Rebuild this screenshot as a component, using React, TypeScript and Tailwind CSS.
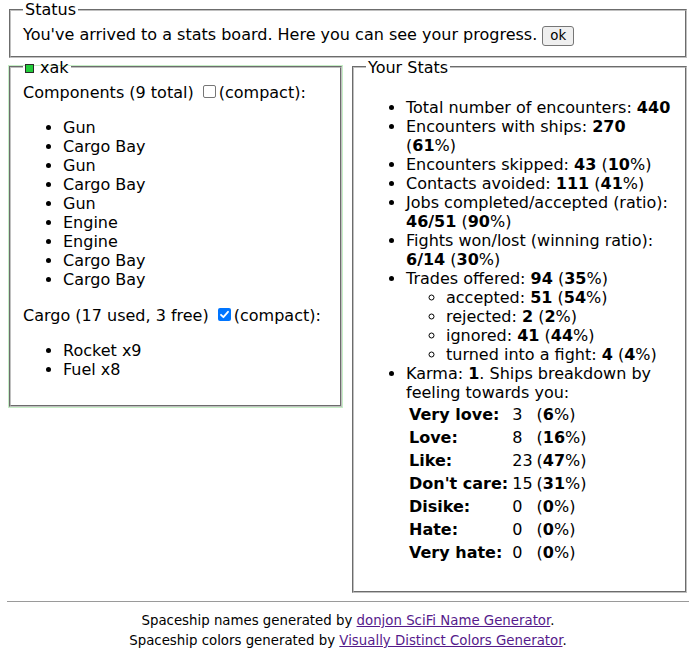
import React from "react";

const box =
  "border-2 [border-style:groove] border-[#c0c0c0] mx-[2px] px-[12px] pt-[5.6px] pb-[10px] min-w-0";

type Pct = { label: string; n: string; p: string };

const components = ["Gun", "Cargo Bay", "Gun", "Cargo Bay", "Gun", "Engine", "Engine", "Cargo Bay", "Cargo Bay"];

const feelings: Pct[] = [
  { label: "Very love:", n: "3", p: "6" },
  { label: "Love:", n: "8", p: "16" },
  { label: "Like:", n: "23", p: "47" },
  { label: "Don't care:", n: "15", p: "31" },
  { label: "Disike:", n: "0", p: "0" },
  { label: "Hate:", n: "0", p: "0" },
  { label: "Very hate:", n: "0", p: "0" },
];

function Check({ on }: { on?: boolean }) {
  if (on)
    return (
      <span className="inline-block w-[13px] h-[13px] mt-[3px] ml-[4px] mr-[3px] align-baseline rounded-[2px] bg-[#0075ff] relative">
        <svg viewBox="0 0 13 13" className="absolute inset-0 w-[13px] h-[13px]">
          <path d="M3 6.8 L5.4 9.2 L10 3.8" fill="none" stroke="#fff" strokeWidth="1.8" strokeLinecap="round" strokeLinejoin="round" />
        </svg>
      </span>
    );
  return (
    <span className="inline-block w-[13px] h-[13px] mt-[3px] ml-[4px] mr-[3px] align-baseline rounded-[2px] border border-[#767676] bg-white" />
  );
}

function Share({ n, p }: { n: string; p: string }) {
  return (
    <>
      <b>{n}</b> (<b>{p}</b>%)
    </>
  );
}

export default function App() {
  return (
    <div className="bg-white text-black font-['DejaVu_Sans',sans-serif] text-[16px] leading-[19px] pl-[7px] pr-[8px] pt-0 pb-[8px]">
      <fieldset className={box}>
        <legend className="px-[2px]">Status</legend>
        <div>
          You've arrived to a stats board. Here you can see your progress.{" "}
          <span className="inline-block align-baseline rounded-[3px] border border-[#767676] bg-[#efefef] px-[7px] py-[1px] text-[13.333px] leading-[16px]">
            ok
          </span>
        </div>
      </fieldset>

      <div className="flex items-start gap-[6px]">
        <fieldset className={`${box} w-[333px] shrink-0 shadow-[0_0_0_1px_#c6efc6]`}>
          <legend className="px-[2px]">
            <span className="inline-block w-[9px] h-[9px] mr-[6px] border border-[#2a2a2a] bg-[#22cc3a] align-[0px]" />
            xak
          </legend>
          <div>
            Components (9 total) <Check />(compact):
          </div>
          <ul className="list-disc pl-10 my-4">
            {components.map((c, i) => (
              <li key={i}>{c}</li>
            ))}
          </ul>
          <div>
            Cargo (17 used, 3 free) <Check on />(compact):
          </div>
          <ul className="list-disc pl-10 my-4">
            <li>Rocket x9</li>
            <li>Fuel x8</li>
          </ul>
        </fieldset>

        <fieldset className={`${box} flex-1`}>
          <legend className="px-[2px]">Your Stats</legend>
          <ul className="list-disc pl-10 my-4">
            <li>
              Total number of encounters: <b>440</b>
            </li>
            <li>
              Encounters with ships: <Share n="270" p="61" />
            </li>
            <li>
              Encounters skipped: <Share n="43" p="10" />
            </li>
            <li>
              Contacts avoided: <Share n="111" p="41" />
            </li>
            <li>
              Jobs completed/accepted (ratio): <Share n="46/51" p="90" />
            </li>
            <li>
              Fights won/lost (winning ratio): <Share n="6/14" p="30" />
            </li>
            <li>
              Trades offered: <Share n="94" p="35" />
              <ul className="list-[circle] pl-10">
                <li>
                  accepted: <Share n="51" p="54" />
                </li>
                <li>
                  rejected: <Share n="2" p="2" />
                </li>
                <li>
                  ignored: <Share n="41" p="44" />
                </li>
                <li>
                  turned into a fight: <Share n="4" p="4" />
                </li>
              </ul>
            </li>
            <li>
              Karma: <b>1</b>. Ships breakdown by feeling towards you:
              <table className="border-separate border-spacing-[2px]">
                <tbody>
                  {feelings.map((f) => (
                    <tr key={f.label}>
                      <td className="p-[1px] font-bold">{f.label}</td>
                      <td className="p-[1px]">{f.n}</td>
                      <td className="p-[1px]">
                        (<b>{f.p}</b>%)
                      </td>
                    </tr>
                  ))}
                </tbody>
              </table>
            </li>
          </ul>
        </fieldset>
      </div>

      <hr className="my-2 border-t border-[#9a9a9a]" />

      <div className="text-center">
        <small className="text-[13.333px]">
          Spaceship names generated by{" "}
          <a href="#" className="text-[#551a8b] underline">
            donjon SciFi Name Generator
          </a>
          .
        </small>
        <br />
        <small className="text-[13.333px]">
          Spaceship colors generated by{" "}
          <a href="#" className="text-[#551a8b] underline">
            Visually Distinct Colors Generator
          </a>
          .
        </small>
      </div>
    </div>
  );
}
